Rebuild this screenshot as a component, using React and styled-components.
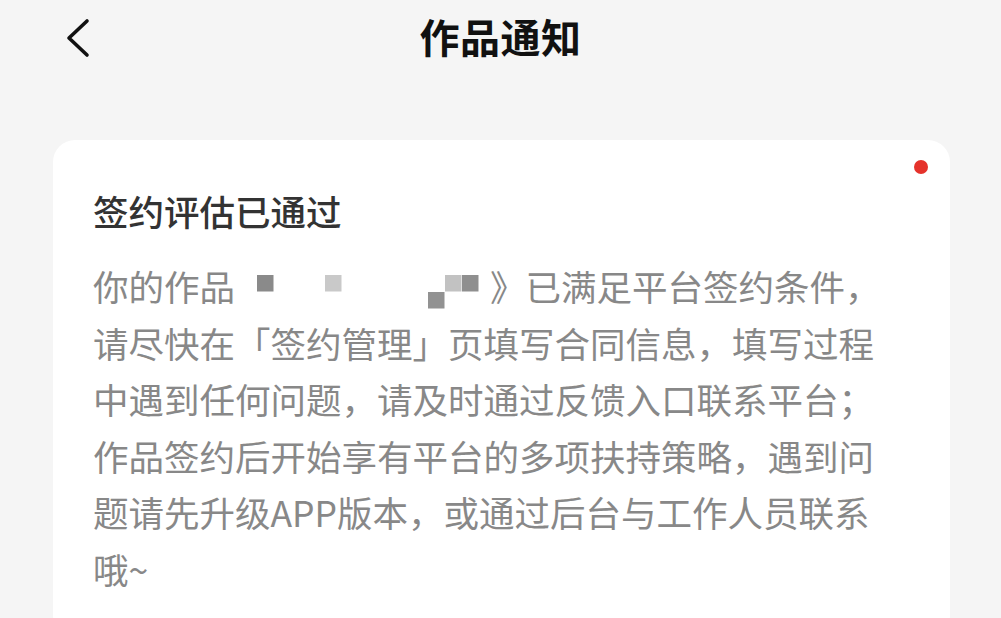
import React from "react";
import styled, { createGlobalStyle } from "styled-components";

const GlobalStyle = createGlobalStyle`
  html, body {
    margin: 0;
    padding: 0;
    background: #f5f5f5;
    overflow: hidden;
  }
  body {
    font-family: "Noto Sans CJK SC", "Noto Sans", sans-serif;
  }
`;

const Page = styled.div`
  width: 1001px;
  height: 618px;
  background: #f5f5f5;
  overflow: hidden;
`;

const Header = styled.div`
  height: 76px;
  display: grid;
  grid-template-columns: 1fr auto 1fr;
  align-items: center;
`;

const BackButton = styled.div`
  padding-left: 65px;
  display: flex;
  align-items: center;
  height: 40px;
  cursor: pointer;
`;

const Title = styled.div`
  font-size: 40px;
  font-weight: 700;
  color: #111;
  line-height: 48px;
  letter-spacing: 0.5px;
  margin-bottom: 5px;
`;

const Main = styled.div`
  padding: 64px 51px 0 53px;
`;

const Card = styled.div`
  position: relative;
  background: #fff;
  border-radius: 22px;
  padding: 46px 57px 40px 40px;
`;

const Dot = styled.span`
  position: absolute;
  top: 20px;
  right: 22px;
  width: 14px;
  height: 14px;
  border-radius: 50%;
  background: #e5322b;
`;

const CardTitle = styled.div`
  font-size: 35.5px;
  font-weight: 500;
  color: #333;
  line-height: 50px;
`;

const Body = styled.div`
  margin-top: 22px;
  font-size: 35.5px;
  line-height: 56.5px;
  color: #888;
`;

const Mosaic = styled.svg`
  display: inline-block;
  vertical-align: -8px;
`;

const tiles = [
  { x: 22, y: 0, c: "#8a8a8a" },
  { x: 90, y: 0, c: "#c9c9c9" },
  { x: 193, y: 17, c: "#929292" },
  { x: 210, y: 0, c: "#c2c2c2" },
  { x: 227, y: 0, c: "#8f8f8f" },
];

const Redacted = () => (
  <Mosaic width="255" height="34" viewBox="0 0 255 34">
    {tiles.map((t, i) => (
      <rect key={i} x={t.x} y={t.y} width="16.5" height="16.5" fill={t.c} />
    ))}
  </Mosaic>
);

export default function App() {
  return (
    <Page>
      <GlobalStyle />
      <Header>
        <BackButton>
          <svg width="28" height="40" viewBox="0 0 28 40">
            <polyline
              points="22,3 4,20 22,37"
              fill="none"
              stroke="#111"
              strokeWidth="3.6"
              strokeLinecap="round"
              strokeLinejoin="round"
            />
          </svg>
        </BackButton>
        <Title>作品通知</Title>
        <div />
      </Header>
      <Main>
        <Card>
          <Dot />
          <CardTitle>签约评估已通过</CardTitle>
          <Body>
            你的作品<Redacted />》已满足平台签约条件，请尽快在「签约管理」页填写合同信息，填写过程中遇到任何问题，请及时通过反馈入口联系平台；作品签约后开始享有平台的多项扶持策略，遇到问题请先升级APP版本，或通过后台与工作人员联系哦~
          </Body>
        </Card>
      </Main>
    </Page>
  );
}
